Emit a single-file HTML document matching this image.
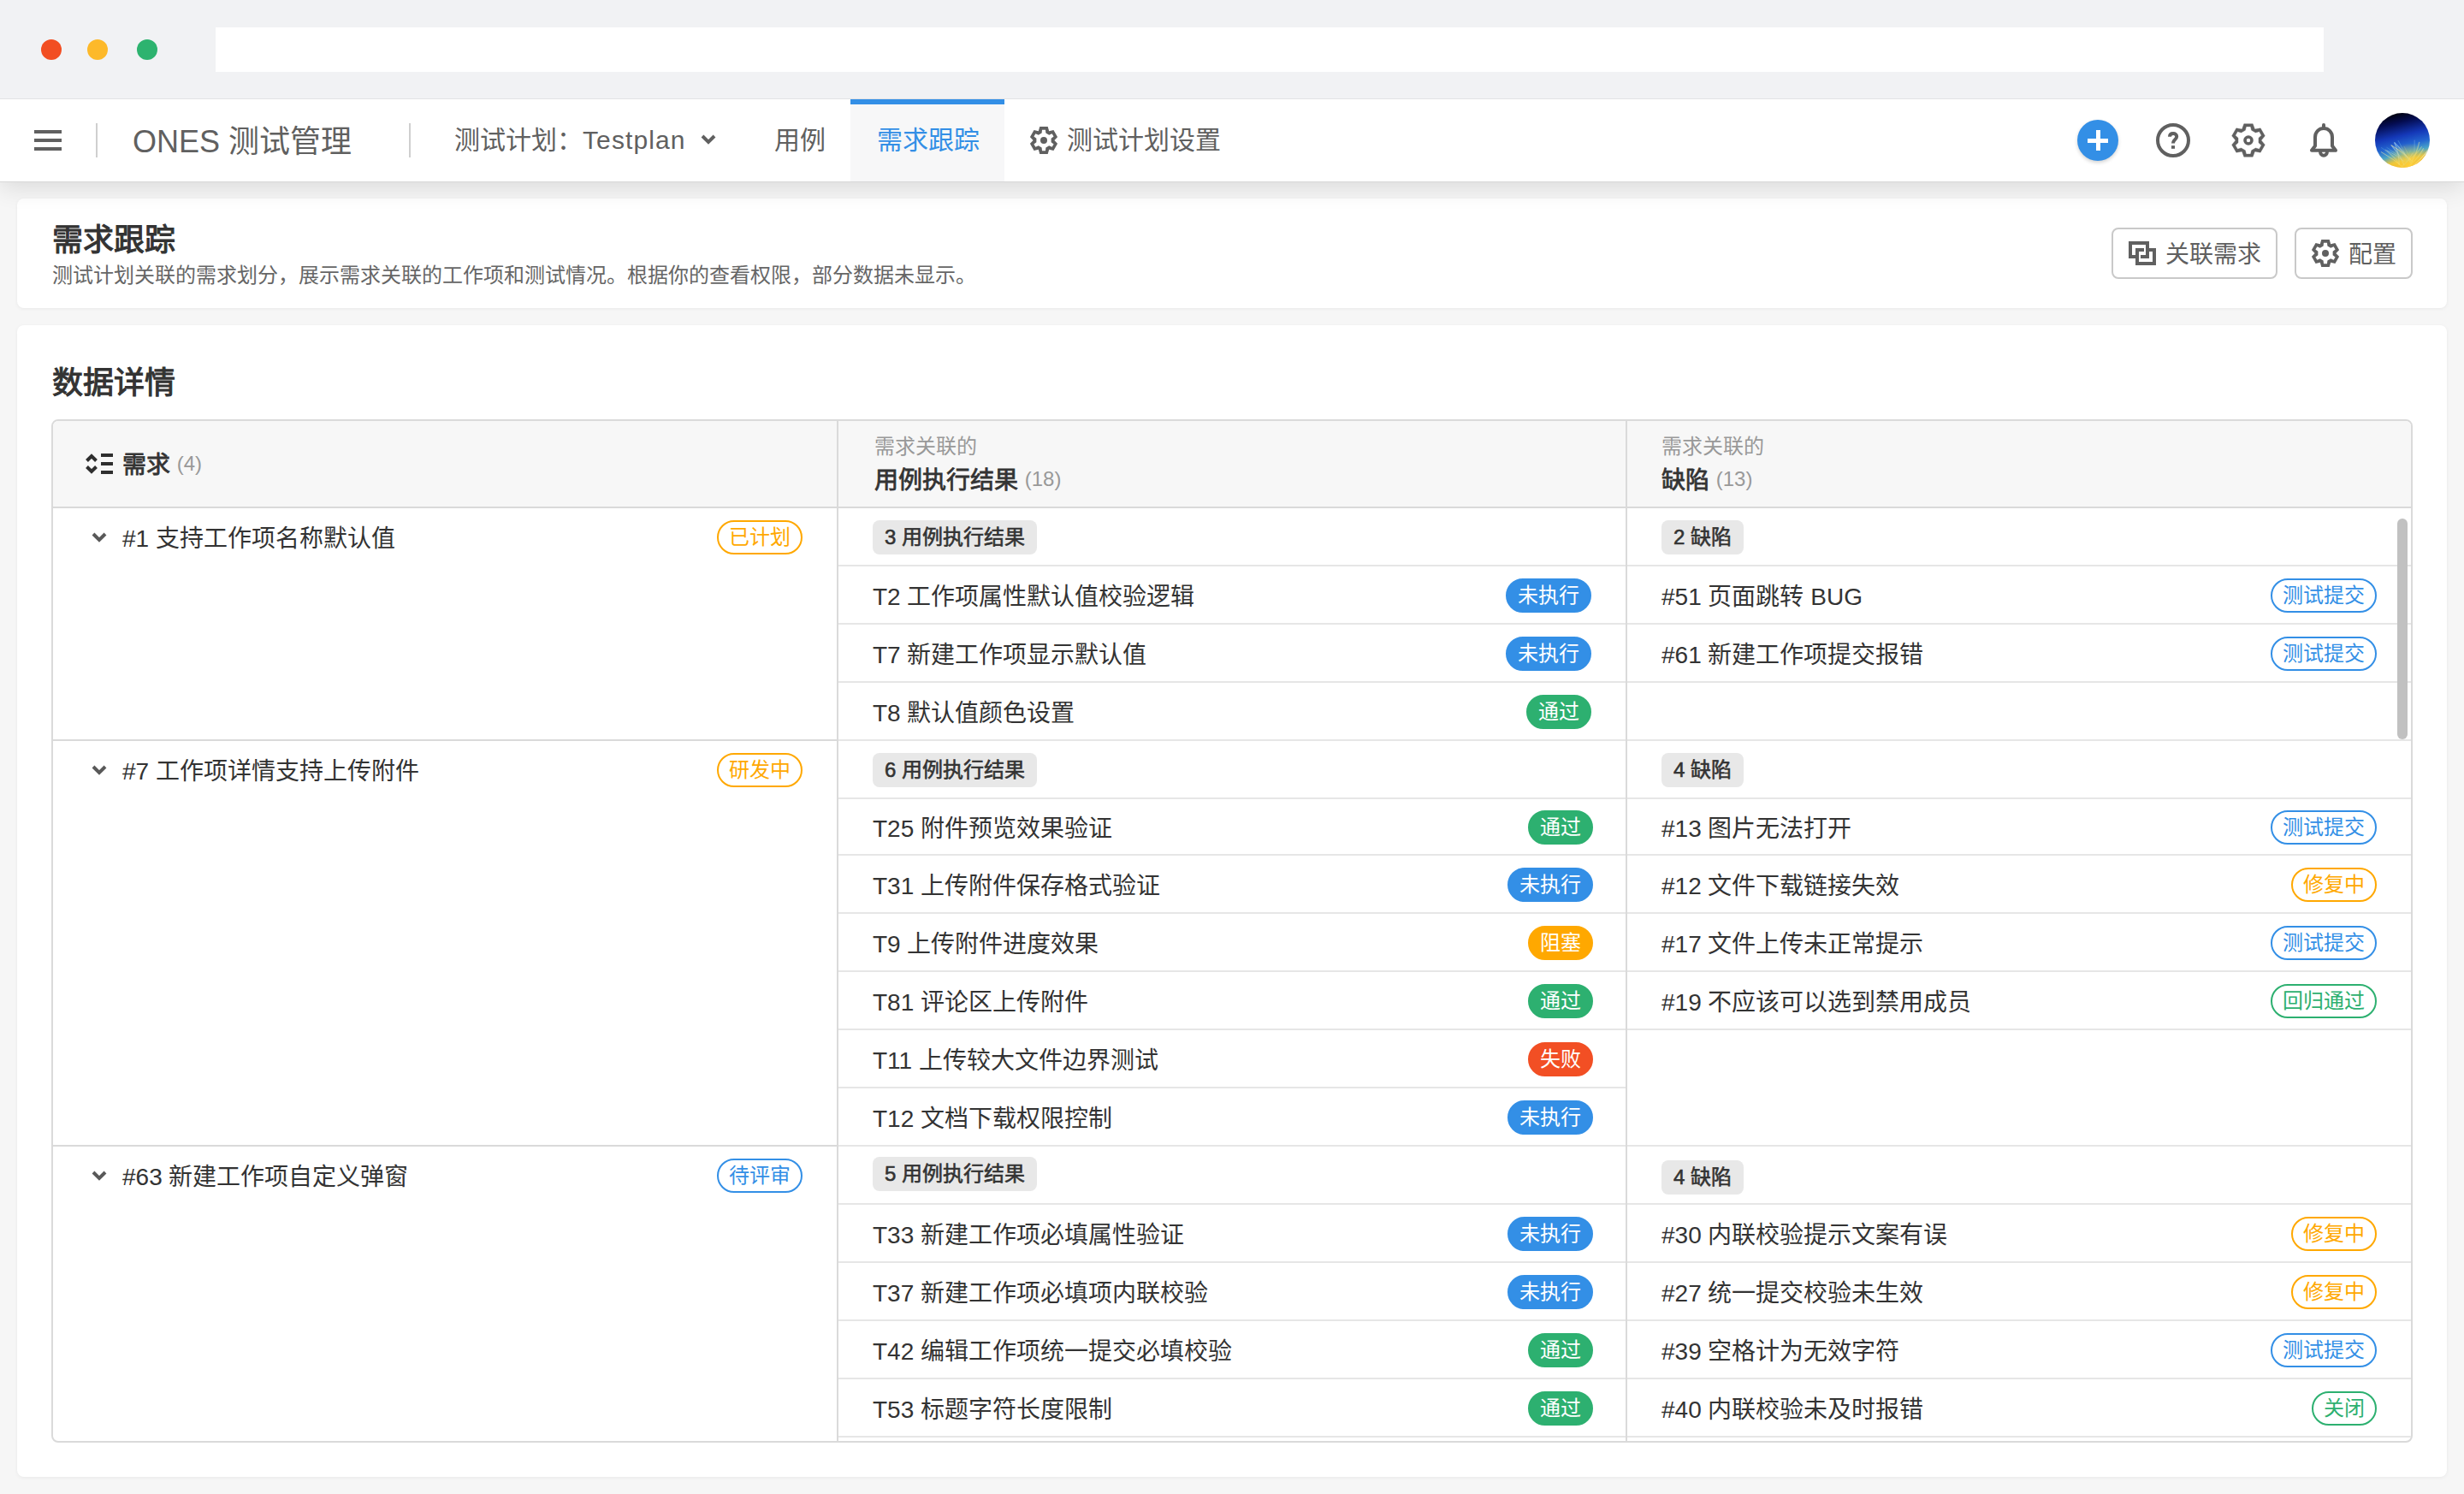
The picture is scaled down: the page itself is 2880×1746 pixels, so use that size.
<!DOCTYPE html>
<html lang="zh-CN"><head><meta charset="utf-8"><title>需求跟踪</title>
<style>
*{box-sizing:border-box;margin:0;padding:0}
html,body{width:2880px;height:1746px;overflow:hidden}
body{position:relative;background:#f6f6f6;font-family:"Liberation Sans",sans-serif;color:#333}
.abs{position:absolute}
.chrome{left:0;top:0;width:2880px;height:116px;background:#f1f2f4;border-bottom:1px solid #e2e3e5;z-index:3}
.dot{width:24px;height:24px;border-radius:50%;top:46px;z-index:4}
.addr{left:252px;top:32px;width:2464px;height:52px;background:#fff;z-index:4}
.hdr{left:0;top:116px;width:2880px;height:96px;background:#fff;box-shadow:0 1px 0 #d8d8d8,0 8px 26px rgba(0,0,0,.11);z-index:2}
.bar{left:40px;width:32px;height:4px;background:#606060}
.vsep{width:2px;height:40px;top:28px;background:#cfcfcf}
.nav{font-size:30px;color:#606060;line-height:40px;top:28px;white-space:nowrap}
.card{left:20px;width:2840px;background:#fff;border-radius:8px;box-shadow:0 1px 4px rgba(0,0,0,.06)}
.btn{top:34px;height:60px;border:2px solid #c9c9c9;border-radius:8px;background:#fff}
.btn span{position:absolute;font-size:28px;color:#606060;line-height:40px;top:10px;white-space:nowrap}
.tbl{left:40px;top:110px;width:2760px;height:1196px;border:2px solid #dadada;border-radius:8px;overflow:hidden;background:#fff}
.thead{position:absolute;left:0;top:0;width:2756px;height:102px;background:#f7f7f7;border-bottom:2px solid #dadada}
.tbody{position:absolute;left:0;top:102px;width:2756px}
.grp{display:flex;width:2756px;overflow:hidden}
.c1{width:918px;border-right:2px solid #dadada;position:relative}
.c2{width:922px;border-right:2px solid #dadada;position:relative;display:flex;flex-direction:column}
.c3{width:916px;position:relative;display:flex;flex-direction:column}
.gtitle{position:absolute;left:0;top:0;width:916px;height:66px}
.chev{position:absolute;left:45px;top:28px}
.ttl{position:absolute;left:81px;top:16px;font-size:28px;line-height:40px;white-space:nowrap;color:#333}
.gtitle .tag{position:absolute;right:40px;top:14px}
.row{flex:none;position:relative;border-bottom:2px solid #e6e6e6;display:flex;align-items:center;padding:0 40px;justify-content:space-between}
.c2 .row{padding:0 40px 0 40px}
.c2.wide .row{padding:0 38px 0 40px}
.pill{position:relative;top:1px;display:inline-block;height:40px;line-height:40px;padding:0 14px;background:#e8e8e8;border-radius:8px;font-size:24px;-webkit-text-stroke:0.6px #333;color:#333;white-space:nowrap}
.itxt{font-size:28px;line-height:40px;color:#333;white-space:nowrap;position:relative;top:3px}
.tag{display:inline-block;height:40px;line-height:36px;border-radius:20px;font-size:24px;text-align:center;white-space:nowrap;position:relative;top:1px}
.sbar{position:absolute;left:900px;top:12px;width:12px;height:258px;border-radius:6px;background:#c1c1c1}
</style></head><body>
<div class="abs chrome"></div>
<div class="abs dot" style="left:48px;background:#f24e22"></div>
<div class="abs dot" style="left:102px;background:#fdb92a"></div>
<div class="abs dot" style="left:160px;background:#2db36f"></div>
<div class="abs addr"></div>

<div class="abs hdr">
  <div class="abs bar" style="top:36px"></div>
  <div class="abs bar" style="top:46px"></div>
  <div class="abs bar" style="top:56px"></div>
  <div class="abs vsep" style="left:112px"></div>
  <div class="abs nav" style="left:155px;font-size:36px;top:28px;line-height:44px">ONES 测试管理</div>
  <div class="abs vsep" style="left:478px"></div>
  <div class="abs nav" style="left:531px">测试计划：<span style="letter-spacing:1.1px">Testplan</span></div>
  <svg class="abs" style="left:818px;top:40px" width="20" height="14" viewBox="0 0 20 14"><path d="M3 3 L10 10 L17 3" fill="none" stroke="#606060" stroke-width="4"/></svg>
  <div class="abs nav" style="left:905px">用例</div>
  <div class="abs" style="left:994px;top:0;width:180px;height:96px;background:#f7f7f8;border-top:6px solid #338fe6"></div>
  <div class="abs nav" style="left:1025px;color:#338fe6">需求跟踪</div>
  <svg class="abs" style="left:1204px;top:32px" width="32" height="32" viewBox="0 0 32 32"><path d="M11.29 0.08 L20.71 0.08 L22.20 5.26 L27.43 3.96 L32.14 12.12 L28.40 16.00 L32.14 19.88 L27.43 28.04 L22.20 26.74 L20.71 31.92 L11.29 31.92 L9.80 26.74 L4.57 28.04 L-0.14 19.88 L3.60 16.00 L-0.14 12.12 L4.57 3.96 L9.80 5.26Z M14.02 3.76 L17.98 3.76 L18.39 7.43 L22.23 9.64 L25.61 8.16 L27.59 11.60 L24.62 13.79 L24.62 18.21 L27.59 20.40 L25.61 23.84 L22.23 22.36 L18.39 24.57 L17.98 28.24 L14.02 28.24 L13.61 24.57 L9.77 22.36 L6.39 23.84 L4.41 20.40 L7.38 18.21 L7.38 13.79 L4.41 11.60 L6.39 8.16 L9.77 9.64 L13.61 7.43Z" fill="#606060" fill-rule="evenodd"/><circle cx="16" cy="16" r="4" fill="#606060"/></svg>
  <div class="abs nav" style="left:1247px">测试计划设置</div>

  <div class="abs" style="left:2428px;top:24px;width:48px;height:48px;border-radius:50%;background:#338fe6;box-shadow:0 2px 4px rgba(0,0,0,.18)"></div>
  <div class="abs" style="left:2440px;top:46px;width:24px;height:5px;background:#fff"></div>
  <div class="abs" style="left:2449.5px;top:36px;width:5px;height:24px;background:#fff"></div>
  <svg class="abs" style="left:2520px;top:28px" width="40" height="40" viewBox="0 0 40 40"><circle cx="20" cy="20" r="18" fill="none" stroke="#606060" stroke-width="4"/><path d="M16 15.8 C16 13.2 17.8 12.1 20.1 12.1 C22.4 12.1 24.2 13.5 24.2 15.6 C24.2 17.8 22.5 18.7 21.2 20.2 C20.3 21.2 20 22 20 23.6" fill="none" stroke="#606060" stroke-width="4"/><rect x="18" y="26.2" width="4" height="3.6" fill="#606060"/></svg>
  <svg class="abs" style="left:2608px;top:28px" width="40" height="40" viewBox="0 0 40 40"><path d="M14.82 0.68 L25.18 0.68 L27.50 7.01 L34.14 5.86 L39.32 14.82 L35.00 20.00 L39.32 25.18 L34.14 34.14 L27.50 32.99 L25.18 39.32 L14.82 39.32 L12.50 32.99 L5.86 34.14 L0.68 25.18 L5.00 20.00 L0.68 14.82 L5.86 5.86 L12.50 7.01Z M17.45 3.90 L22.55 3.90 L23.60 8.24 L28.39 11.00 L32.67 9.74 L35.22 14.16 L31.98 17.23 L31.98 22.77 L35.22 25.84 L32.67 30.26 L28.39 29.00 L23.60 31.76 L22.55 36.10 L17.45 36.10 L16.40 31.76 L11.61 29.00 L7.33 30.26 L4.78 25.84 L8.02 22.77 L8.02 17.23 L4.78 14.16 L7.33 9.74 L11.61 11.00 L16.40 8.24Z" fill="#606060" fill-rule="evenodd" stroke="#606060" stroke-width="0.4" stroke-linejoin="round"/><circle cx="20" cy="20" r="4" fill="none" stroke="#606060" stroke-width="3.6"/></svg>
  <svg class="abs" style="left:2698px;top:26px" width="36" height="44" viewBox="0 0 36 44"><path d="M18 4 L18 7" stroke="#606060" stroke-width="4" stroke-linecap="round"/><path d="M8 28.5 L8 18.5 C8 12 12.5 8 18 8 C23.5 8 28 12 28 18.5 L28 28.5 L32 33.8 L4 33.8 Z" fill="none" stroke="#606060" stroke-width="4" stroke-linejoin="round"/><path d="M14 35 C14 37.8 15.8 39.8 18 39.8 C20.2 39.8 22 37.8 22 35" fill="none" stroke="#606060" stroke-width="4"/></svg>
  <svg class="abs" style="left:2776px;top:16px" width="64" height="64" viewBox="0 0 64 64"><defs><linearGradient id="av" x1="0.35" y1="0" x2="0.6" y2="1"><stop offset="0" stop-color="#000008"/><stop offset="0.18" stop-color="#040c50"/><stop offset="0.42" stop-color="#1438b8"/><stop offset="0.6" stop-color="#2466d0"/><stop offset="0.74" stop-color="#4aa6c8"/><stop offset="0.86" stop-color="#e6c23a"/><stop offset="1" stop-color="#f4a81a"/></linearGradient><radialGradient id="ay" cx="0.62" cy="1" r="0.45"><stop offset="0" stop-color="#ffd23a" stop-opacity="0.95"/><stop offset="1" stop-color="#ffd23a" stop-opacity="0"/></radialGradient><clipPath id="ac"><circle cx="32" cy="32" r="32"/></clipPath></defs><g clip-path="url(#ac)"><rect width="64" height="64" fill="url(#av)"/><path d="M33.9 60.8 Q29.7 49.6 19.5 38.3" stroke="#bfe8ff" stroke-opacity="0.47" stroke-width="1.1" fill="none"/><path d="M36.8 57.5 Q48.8 48.4 54.7 39.3" stroke="#fff2a0" stroke-opacity="0.50" stroke-width="0.9" fill="none"/><path d="M30.4 63.4 Q40.3 55.0 44.1 46.5" stroke="#bfe8ff" stroke-opacity="0.39" stroke-width="1.1" fill="none"/><path d="M37.5 58.4 Q28.5 49.3 13.5 40.1" stroke="#7fd0e8" stroke-opacity="0.26" stroke-width="1.0" fill="none"/><path d="M39.4 63.4 Q48.6 48.6 51.8 33.8" stroke="#fff2a0" stroke-opacity="0.39" stroke-width="1.4" fill="none"/><path d="M28.6 60.0 Q23.2 51.5 11.8 43.0" stroke="#fff2a0" stroke-opacity="0.34" stroke-width="1.2" fill="none"/><path d="M41.3 60.6 Q52.0 50.9 56.7 41.2" stroke="#fff2a0" stroke-opacity="0.44" stroke-width="1.1" fill="none"/><path d="M42.9 62.9 Q55.9 52.4 62.9 42.0" stroke="#e9f7ff" stroke-opacity="0.60" stroke-width="1.2" fill="none"/><path d="M37.2 56.8 Q35.1 44.5 27.0 32.2" stroke="#7fd0e8" stroke-opacity="0.48" stroke-width="0.8" fill="none"/><path d="M43.8 56.7 Q34.2 47.1 18.6 37.5" stroke="#fff2a0" stroke-opacity="0.53" stroke-width="1.3" fill="none"/><path d="M34.6 57.0 Q27.1 50.3 13.7 43.7" stroke="#bfe8ff" stroke-opacity="0.46" stroke-width="0.9" fill="none"/><path d="M42.8 58.2 Q47.5 44.9 46.2 31.6" stroke="#bfe8ff" stroke-opacity="0.33" stroke-width="0.8" fill="none"/><path d="M28.5 57.6 Q20.8 48.9 7.0 40.3" stroke="#7fd0e8" stroke-opacity="0.39" stroke-width="0.7" fill="none"/><path d="M33.0 63.7 Q22.9 54.6 6.9 45.4" stroke="#fff2a0" stroke-opacity="0.56" stroke-width="0.9" fill="none"/><path d="M41.9 61.4 Q52.6 52.2 57.4 42.9" stroke="#7fd0e8" stroke-opacity="0.29" stroke-width="0.9" fill="none"/><path d="M32.8 63.8 Q40.0 53.8 41.3 43.7" stroke="#7fd0e8" stroke-opacity="0.43" stroke-width="0.6" fill="none"/><path d="M28.3 60.9 Q28.4 47.6 22.5 34.3" stroke="#bfe8ff" stroke-opacity="0.47" stroke-width="1.1" fill="none"/><path d="M42.7 60.9 Q41.3 49.9 33.9 38.9" stroke="#fff2a0" stroke-opacity="0.35" stroke-width="0.6" fill="none"/><path d="M43.4 58.0 Q34.9 49.3 20.4 40.7" stroke="#7fd0e8" stroke-opacity="0.41" stroke-width="0.7" fill="none"/><path d="M41.5 58.1 Q35.1 46.4 22.7 34.6" stroke="#bfe8ff" stroke-opacity="0.53" stroke-width="1.2" fill="none"/><path d="M39.8 58.5 Q31.4 51.1 17.1 43.7" stroke="#7fd0e8" stroke-opacity="0.33" stroke-width="0.8" fill="none"/><path d="M39.2 56.8 Q34.4 47.0 23.6 37.3" stroke="#7fd0e8" stroke-opacity="0.36" stroke-width="1.1" fill="none"/><rect width="64" height="64" fill="url(#ay)"/></g></svg>
</div>

<div class="abs card" style="top:232px;height:128px">
  <div class="abs" style="left:41px;top:25px;font-size:36px;font-weight:400;-webkit-text-stroke:1.1px #333;line-height:48px;color:#333;white-space:nowrap">需求跟踪</div>
  <div class="abs" style="left:41px;top:74px;font-size:24px;line-height:32px;color:#666;white-space:nowrap">测试计划关联的需求划分，展示需求关联的工作项和测试情况。根据你的查看权限，部分数据未显示。</div>
  <div class="abs btn" style="left:2448px;width:194px">
    <svg class="abs" style="left:18px;top:14px" width="34" height="30" viewBox="0 0 34 30"><path fill="#606060" d="M0 0H24V4H0Z M0 0H4V20H0Z M20 0H24V20H20Z M0 16H8V20H0Z M14 16H24V20H14Z M8 8H12V28H8Z M8 24H32V28H8Z M28 8H32V28H28Z M8 8H18V12H8Z M24 8H32V12H24Z"/></svg>
    <span style="left:61px">关联需求</span>
  </div>
  <div class="abs btn" style="left:2662px;width:138px">
    <svg class="abs" style="left:18px;top:12px" width="32" height="32" viewBox="0 0 32 32"><path d="M11.29 0.08 L20.71 0.08 L22.20 5.26 L27.43 3.96 L32.14 12.12 L28.40 16.00 L32.14 19.88 L27.43 28.04 L22.20 26.74 L20.71 31.92 L11.29 31.92 L9.80 26.74 L4.57 28.04 L-0.14 19.88 L3.60 16.00 L-0.14 12.12 L4.57 3.96 L9.80 5.26Z M14.02 3.76 L17.98 3.76 L18.39 7.43 L22.23 9.64 L25.61 8.16 L27.59 11.60 L24.62 13.79 L24.62 18.21 L27.59 20.40 L25.61 23.84 L22.23 22.36 L18.39 24.57 L17.98 28.24 L14.02 28.24 L13.61 24.57 L9.77 22.36 L6.39 23.84 L4.41 20.40 L7.38 18.21 L7.38 13.79 L4.41 11.60 L6.39 8.16 L9.77 9.64 L13.61 7.43Z" fill="#606060" fill-rule="evenodd"/><circle cx="16" cy="16" r="4" fill="#606060"/></svg>
    <span style="left:61px">配置</span>
  </div>
</div>

<div class="abs card" style="top:380px;height:1346px">
  <div class="abs" style="left:41px;top:44px;font-size:36px;font-weight:400;-webkit-text-stroke:1.1px #333;line-height:48px;color:#333;white-space:nowrap">数据详情</div>
  <div class="abs tbl">
    <div class="thead">
      <svg class="abs" style="left:38px;top:38px" width="34" height="26" viewBox="0 0 34 26"><path d="M1.5 8.5 L7 3 L12.5 8.5" fill="none" stroke="#2e2e2e" stroke-width="4"/><path d="M1.5 15.5 L7 21 L12.5 15.5" fill="none" stroke="#2e2e2e" stroke-width="4"/><path fill="#2e2e2e" d="M18 0H32V4H18Z M18 10H32V14H18Z M18 20H32V24H18Z"/></svg>
      <div class="abs" style="left:81px;top:32px;font-size:28px;line-height:40px;-webkit-text-stroke:0.8px #333;white-space:nowrap">需求 <span style="-webkit-text-stroke:0;color:#999;font-size:24px;position:relative;top:-3px">(4)</span></div>
      <div class="abs" style="left:960px;top:14px;font-size:24px;line-height:32px;color:#999;white-space:nowrap">需求关联的</div>
      <div class="abs" style="left:960px;top:50px;font-size:28px;line-height:40px;-webkit-text-stroke:0.8px #333;white-space:nowrap">用例执行结果 <span style="-webkit-text-stroke:0;color:#999;font-size:24px;position:relative;top:-3px">(18)</span></div>
      <div class="abs" style="left:1880px;top:14px;font-size:24px;line-height:32px;color:#999;white-space:nowrap">需求关联的</div>
      <div class="abs" style="left:1880px;top:50px;font-size:28px;line-height:40px;-webkit-text-stroke:0.8px #333;white-space:nowrap">缺陷 <span style="-webkit-text-stroke:0;color:#999;font-size:24px;position:relative;top:-3px">(13)</span></div>
      <div class="abs" style="left:916px;top:0;width:2px;height:100px;background:#dadada"></div>
      <div class="abs" style="left:1838px;top:0;width:2px;height:100px;background:#dadada"></div>
    </div>
    <div class="tbody">
      <div class="grp" style="height:272px"><div class="c1" style="border-bottom:2px solid #dadada;"><div class="gtitle"><svg class="chev" width="18" height="12" viewBox="0 0 18 12"><path d="M2 2 L9 9 L16 2" fill="none" stroke="#595959" stroke-width="4"/></svg><span class="ttl">#1 支持工作项名称默认值</span><span class="tag" style="width:100px;background:#fff;color:#ffa800;border:2px solid #ffa800;">已计划</span></div></div><div class="c2"><div class="row" style="height:68px"><span class="pill" style="top:1px">3 用例执行结果</span></div><div class="row" style="height:68px"><span class="itxt">T2 工作项属性默认值校验逻辑</span><span class="tag" style="width:100px;background:#338fe6;color:#fff;border:2px solid #338fe6;">未执行</span></div><div class="row" style="height:68px"><span class="itxt">T7 新建工作项显示默认值</span><span class="tag" style="width:100px;background:#338fe6;color:#fff;border:2px solid #338fe6;">未执行</span></div><div class="row" style="height:68px"><span class="itxt">T8 默认值颜色设置</span><span class="tag" style="width:76px;background:#2db070;color:#fff;border:2px solid #2db070;">通过</span></div></div><div class="c3"><div class="row" style="height:68px"><span class="pill" style="top:1px">2 缺陷</span></div><div class="row" style="height:68px"><span class="itxt">#51 页面跳转 BUG</span><span class="tag" style="width:124px;background:#fff;color:#338fe6;border:2px solid #338fe6;">测试提交</span></div><div class="row" style="height:68px"><span class="itxt">#61 新建工作项提交报错</span><span class="tag" style="width:124px;background:#fff;color:#338fe6;border:2px solid #338fe6;">测试提交</span></div><div class="row" style="height:68px"></div><div class="sbar"></div></div></div><div class="grp" style="height:474px"><div class="c1" style="border-bottom:2px solid #dadada;"><div class="gtitle"><svg class="chev" width="18" height="12" viewBox="0 0 18 12"><path d="M2 2 L9 9 L16 2" fill="none" stroke="#595959" stroke-width="4"/></svg><span class="ttl">#7 工作项详情支持上传附件</span><span class="tag" style="width:100px;background:#fff;color:#ffa800;border:2px solid #ffa800;">研发中</span></div></div><div class="c2 wide"><div class="row" style="height:68px"><span class="pill" style="top:1px">6 用例执行结果</span></div><div class="row" style="height:66px"><span class="itxt">T25 附件预览效果验证</span><span class="tag" style="width:76px;background:#2db070;color:#fff;border:2px solid #2db070;">通过</span></div><div class="row" style="height:68px"><span class="itxt">T31 上传附件保存格式验证</span><span class="tag" style="width:100px;background:#338fe6;color:#fff;border:2px solid #338fe6;">未执行</span></div><div class="row" style="height:68px"><span class="itxt">T9 上传附件进度效果</span><span class="tag" style="width:76px;background:#ffa800;color:#fff;border:2px solid #ffa800;">阻塞</span></div><div class="row" style="height:68px"><span class="itxt">T81 评论区上传附件</span><span class="tag" style="width:76px;background:#2db070;color:#fff;border:2px solid #2db070;">通过</span></div><div class="row" style="height:68px"><span class="itxt">T11 上传较大文件边界测试</span><span class="tag" style="width:76px;background:#f24f24;color:#fff;border:2px solid #f24f24;">失败</span></div><div class="row" style="height:68px"><span class="itxt">T12 文档下载权限控制</span><span class="tag" style="width:100px;background:#338fe6;color:#fff;border:2px solid #338fe6;">未执行</span></div></div><div class="c3"><div class="row" style="height:68px"><span class="pill" style="top:1px">4 缺陷</span></div><div class="row" style="height:66px"><span class="itxt">#13 图片无法打开</span><span class="tag" style="width:124px;background:#fff;color:#338fe6;border:2px solid #338fe6;">测试提交</span></div><div class="row" style="height:68px"><span class="itxt">#12 文件下载链接失效</span><span class="tag" style="width:100px;background:#fff;color:#ffa800;border:2px solid #ffa800;">修复中</span></div><div class="row" style="height:68px"><span class="itxt">#17 文件上传未正常提示</span><span class="tag" style="width:124px;background:#fff;color:#338fe6;border:2px solid #338fe6;">测试提交</span></div><div class="row" style="height:68px"><span class="itxt">#19 不应该可以选到禁用成员</span><span class="tag" style="width:124px;background:#fff;color:#2db070;border:2px solid #2db070;">回归通过</span></div><div class="row" style="height:136px"></div></div></div><div class="grp" style="height:420px"><div class="c1" style=""><div class="gtitle"><svg class="chev" width="18" height="12" viewBox="0 0 18 12"><path d="M2 2 L9 9 L16 2" fill="none" stroke="#595959" stroke-width="4"/></svg><span class="ttl">#63 新建工作项自定义弹窗</span><span class="tag" style="width:100px;background:#fff;color:#338fe6;border:2px solid #338fe6;">待评审</span></div></div><div class="c2 wide"><div class="row" style="height:68px"><span class="pill" style="top:-1px">5 用例执行结果</span></div><div class="row" style="height:68px"><span class="itxt">T33 新建工作项必填属性验证</span><span class="tag" style="width:100px;background:#338fe6;color:#fff;border:2px solid #338fe6;">未执行</span></div><div class="row" style="height:68px"><span class="itxt">T37 新建工作项必填项内联校验</span><span class="tag" style="width:100px;background:#338fe6;color:#fff;border:2px solid #338fe6;">未执行</span></div><div class="row" style="height:68px"><span class="itxt">T42 编辑工作项统一提交必填校验</span><span class="tag" style="width:76px;background:#2db070;color:#fff;border:2px solid #2db070;">通过</span></div><div class="row" style="height:68px"><span class="itxt">T53 标题字符长度限制</span><span class="tag" style="width:76px;background:#2db070;color:#fff;border:2px solid #2db070;">通过</span></div><div class="row" style="height:68px"><span class="itxt"></span></div></div><div class="c3"><div class="row" style="height:68px"><span class="pill" style="top:3px">4 缺陷</span></div><div class="row" style="height:68px"><span class="itxt">#30 内联校验提示文案有误</span><span class="tag" style="width:100px;background:#fff;color:#ffa800;border:2px solid #ffa800;">修复中</span></div><div class="row" style="height:68px"><span class="itxt">#27 统一提交校验未生效</span><span class="tag" style="width:100px;background:#fff;color:#ffa800;border:2px solid #ffa800;">修复中</span></div><div class="row" style="height:68px"><span class="itxt">#39 空格计为无效字符</span><span class="tag" style="width:124px;background:#fff;color:#338fe6;border:2px solid #338fe6;">测试提交</span></div><div class="row" style="height:68px"><span class="itxt">#40 内联校验未及时报错</span><span class="tag" style="width:76px;background:#fff;color:#2db070;border:2px solid #2db070;">关闭</span></div><div class="row" style="height:68px"><span class="itxt"></span></div></div></div>
    </div>
  </div>
</div>
</body></html>
